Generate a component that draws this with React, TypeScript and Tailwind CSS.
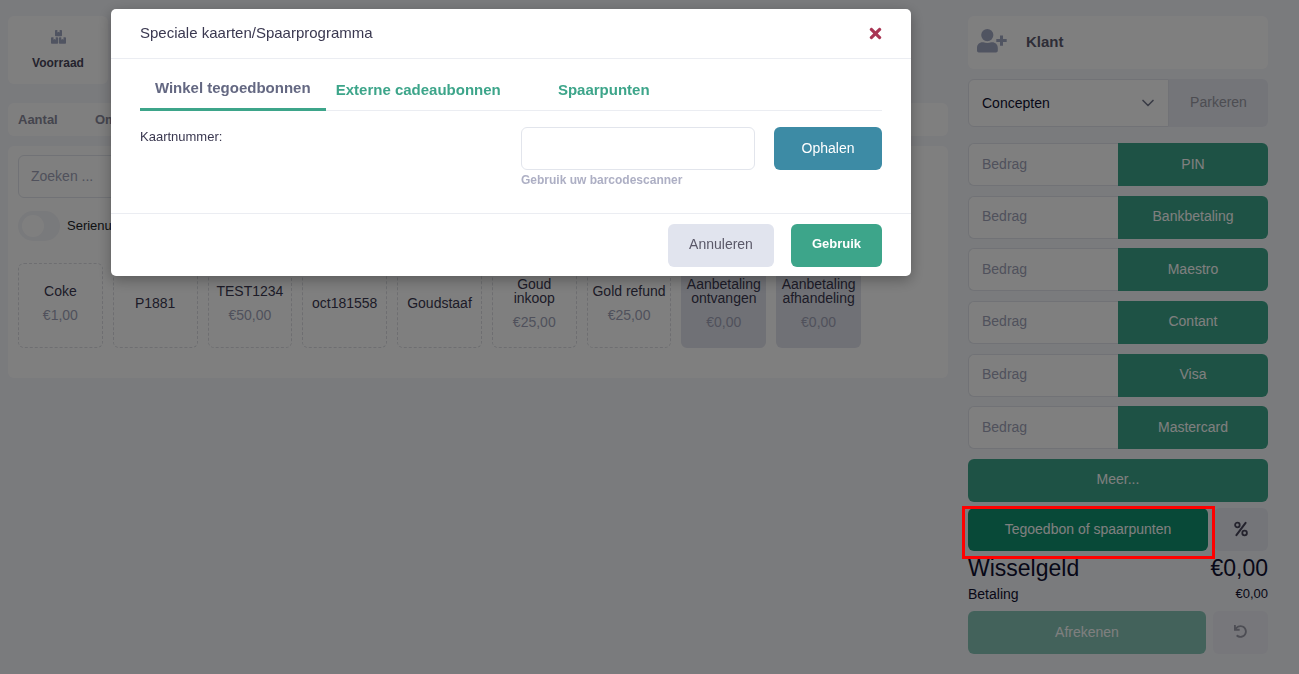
import React from "react";
import { FaTimes, FaUndo } from "react-icons/fa";
import { ChevronDown } from "lucide-react";

type Product = { name: string; price?: string; filled?: boolean };

const products: Product[] = [
  { name: "Coke", price: "€1,00" },
  { name: "P1881" },
  { name: "TEST1234", price: "€50,00" },
  { name: "oct181558" },
  { name: "Goudstaaf" },
  { name: "Goud inkoop", price: "€25,00" },
  { name: "Gold refund", price: "€25,00" },
  { name: "Aanbetaling ontvangen", price: "€0,00", filled: true },
  { name: "Aanbetaling afhandeling", price: "€0,00", filled: true },
];

const methods = ["PIN", "Bankbetaling", "Maestro", "Contant", "Visa", "Mastercard"];

function BoxesIcon() {
  return (
    <svg viewBox="0 0 15 14" className="h-[14px] w-[15px] text-[#a1a8c3]" fill="currentColor" aria-hidden="true">
      <path d="M4.8 0H6.4V2.4L7.5 1.8L8.6 2.4V0H10.2Q11 0 11 .8V5.4Q11 6.2 10.2 6.2H4.8Q4 6.2 4 5.4V.8Q4 0 4.8 0Z" />
      <path d="M.8 7.2H2.5V9.7L3.6 9L4.7 9.7V7.2H6.3Q7.1 7.2 7.1 8V13Q7.1 13.8 6.3 13.8H.8Q0 13.8 0 13V8Q0 7.2 .8 7.2Z" />
      <path d="M8.7 7.2H10.3V9.7L11.4 9L12.5 9.7V7.2H14.2Q15 7.2 15 8V13Q15 13.8 14.2 13.8H8.7Q7.9 13.8 7.9 13V8Q7.9 7.2 8.7 7.2Z" />
    </svg>
  );
}

function UserPlusIcon() {
  return (
    <svg viewBox="0 0 30 24" className="h-6 w-[30px] text-[#a1a8c3]" fill="currentColor" aria-hidden="true">
      <circle cx="10.3" cy="6.1" r="6.1" />
      <path d="M5.5 13.2H6.4C8.8 14.2 11.8 14.2 14.2 13.2H15.2C18.4 13.2 20.8 15.6 20.8 18.8V21.8Q20.8 23.6 19 23.6H1.8Q0 23.6 0 21.8V18.8C0 15.6 2.3 13.2 5.5 13.2Z" />
      <path d="M23 6.4H26V10.1H29.7V13.1H26V16.8H23V13.1H19.3V10.1H23Z" />
    </svg>
  );
}

function PercentIcon() {
  return (
    <svg viewBox="0 0 14 16" className="h-4 w-[14px]" fill="none" stroke="currentColor" strokeWidth="1.8" aria-hidden="true">
      <circle cx="3.4" cy="4" r="2.3" />
      <circle cx="10.6" cy="12" r="2.3" />
      <path d="M11.6 1.8L2.4 14.2" strokeWidth="2" strokeLinecap="round" />
    </svg>
  );
}

function ProductTile({ name, price, filled }: Product) {
  return (
    <button
      type="button"
      className={`flex h-[85px] min-w-0 flex-col items-center justify-center gap-[10px] rounded-md pb-[6px] text-sm leading-[14px] text-[#3a3850] ${
        filled ? "bg-[#e1e3ec]" : "border border-dashed border-[#dcdde2]"
      }`}
    >
      <span className={name === "Goud inkoop" ? "px-4" : ""}>{name}</span>
      {price && <span className="text-[#a0a3b8]">{price}</span>}
    </button>
  );
}

function Register() {
  return (
    <main className="flex min-w-0 flex-1 flex-col">
      <button
        type="button"
        className="flex h-[68px] w-[100px] flex-col items-center justify-center gap-[11px] rounded-md bg-white text-xs font-bold text-[#48465b]"
      >
        <BoxesIcon />
        Voorraad
      </button>
      <div className="mt-[19px] flex h-[33px] items-center rounded-md bg-white px-[10px] text-[13px] font-bold text-[#8a8a9c]">
        <span className="w-[77px]">Aantal</span>
        <span>Omschrijving</span>
      </div>
      <section className="mt-[10px] h-[232px] rounded-md bg-white px-[10px] pt-[9px]">
        <input
          aria-label="Zoeken"
          placeholder="Zoeken ..."
          className="block h-[43px] w-full max-w-[843px] rounded-md border border-[#e2e5ec] px-3 pb-[2px] text-sm placeholder:text-[#a0a3b8]"
        />
        <label className="mt-[13px] flex items-center gap-[7px] text-[13px] text-[#212529]">
          <input type="checkbox" className="peer sr-only" />
          <span className="flex h-[30px] w-[42px] items-center rounded-full bg-[#f3f4f8] px-1">
            <span className="size-[22px] rounded-full bg-white" />
          </span>
          Serienummers
        </label>
        <div className="mt-[22px] grid max-w-[843px] grid-cols-9 gap-[10px]">
          {products.map((p) => (
            <ProductTile key={p.name} {...p} />
          ))}
        </div>
      </section>
    </main>
  );
}

function Checkout() {
  return (
    <aside className="w-[300px] shrink-0">
      <button
        type="button"
        className="flex h-[53px] w-full items-center gap-[19px] rounded-md bg-white px-[9px] text-[15px] font-bold text-[#5d5b6f]"
      >
        <span className="pb-[3px]">
          <UserPlusIcon />
        </span>
        Klant
      </button>
      <div className="mt-[10px] flex h-12">
        <div className="relative w-[201px]">
          <select
            aria-label="Concepten"
            className="size-full appearance-none rounded-l-md border border-[#e2e5ec] bg-white px-[13px] text-sm text-[#101030]"
          >
            <option>Concepten</option>
          </select>
          <ChevronDown className="pointer-events-none absolute top-[14px] right-[11px] size-5 text-[#74788d]" />
        </div>
        <button type="button" className="flex-1 rounded-r-md bg-[#e8eaf3] pb-[2px] text-sm text-[#9a9ba5]">
          Parkeren
        </button>
      </div>
      <div className="mt-4 flex h-[359px] flex-col justify-between">
        {methods.map((m) => (
          <div key={m} className="flex h-[43px]">
            <input
              aria-label={`Bedrag ${m}`}
              placeholder="Bedrag"
              className="w-1/2 rounded-l-md border border-r-0 border-[#e2e5ec] bg-white px-[13px] pb-[2px] text-sm placeholder:text-[#a0a3b8]"
            />
            <button type="button" className="w-1/2 rounded-r-md bg-[#3da58a] pb-[2px] text-sm text-white">
              {m}
            </button>
          </div>
        ))}
        <button type="button" className="h-[43px] rounded-md bg-[#3da58a] pb-[2px] text-sm text-white">
          Meer...
        </button>
      </div>
      <div className="mt-[6px] flex h-[43px] gap-[6px]">
        <div className="relative w-60">
          <button type="button" className="size-full rounded-md bg-[#109270] pb-[2px] text-sm text-white">
            Tegoedbon of spaarpunten
          </button>
          <span className="pointer-events-none absolute -top-[2px] -right-[7px] -bottom-2 -left-[6px] z-20 border-[3px] border-[#ff0000]" />
        </div>
        <button
          type="button"
          aria-label="Korting"
          className="flex flex-1 items-center justify-center rounded-md bg-[#e8eaf3] pb-[2px] text-[#48465b]"
        >
          <PercentIcon />
        </button>
      </div>
      <div className="mt-1 flex items-center justify-between text-[23px] leading-[26px] text-[#101030]">
        <span>Wisselgeld</span>
        <span>€0,00</span>
      </div>
      <div className="mt-[3px] flex items-center justify-between text-sm leading-5 text-[#101030]">
        <span>Betaling</span>
        <span className="text-[13px]">€0,00</span>
      </div>
      <div className="mt-[7px] flex h-[43px] gap-[7px]">
        <button type="button" className="w-[238px] rounded-md bg-[#86c5b6] pb-[2px] text-sm text-white">
          Afrekenen
        </button>
        <button
          type="button"
          aria-label="Herstellen"
          className="flex flex-1 items-center justify-center rounded-md bg-[#eeeff6] pb-[2px] text-[#9a9ba8]"
        >
          <FaUndo className="size-[13px]" />
        </button>
      </div>
    </aside>
  );
}

function GiftCardDialog() {
  return (
    <div
      role="dialog"
      aria-labelledby="dialog-title"
      className="w-full max-w-[800px] rounded-[5px] bg-white shadow-[0_4px_14px_rgba(0,0,0,0.3)]"
    >
      <header className="flex h-[50px] items-center justify-between border-b border-[#ebedf2] px-[29px] pb-px">
        <h2 id="dialog-title" className="text-[15px] text-[#3a3850]">
          Speciale kaarten/Spaarprogramma
        </h2>
        <button type="button" aria-label="Sluiten" className="text-[#a93554]">
          <FaTimes className="-mr-[2px] size-[17px]" />
        </button>
      </header>
      <div className="h-[154px] px-[29px] pt-2">
        <div role="tablist" className="grid h-11 grid-cols-4 border-b border-[#ebedf2] text-[15px] font-bold text-[#3da58a]">
          <button role="tab" aria-selected="true" className="-mb-px border-b-[3px] border-[#3da58a] pt-[2px] text-[#646882]">
            Winkel tegoedbonnen
          </button>
          <button role="tab" aria-selected="false" className="pt-1">
            Externe cadeaubonnen
          </button>
          <button role="tab" aria-selected="false" className="pt-1">
            Spaarpunten
          </button>
        </div>
        <div className="mt-4 flex items-start">
          <label htmlFor="card" className="flex-1 text-[13px] leading-5 text-[#3a3850]">
            Kaartnummer:
          </label>
          <div className="w-[234px]">
            <input id="card" className="block h-[43px] w-full rounded-md border border-[#e2e5ec] px-3 text-sm" />
            <p className="text-xs leading-5 font-bold text-[#adafc4]">Gebruik uw barcodescanner</p>
          </div>
          <button type="button" className="ml-[19px] h-[43px] w-[108px] rounded-md bg-[#3d8ba5] pb-[2px] text-sm text-white">
            Ophalen
          </button>
        </div>
      </div>
      <footer className="flex h-[63px] items-center justify-end gap-[17px] border-t border-[#ebedf2] px-[29px] text-sm">
        <button type="button" className="h-[43px] w-[106px] rounded-md bg-[#e1e4ee] pb-[2px] text-[#5a5868]">
          Annuleren
        </button>
        <button type="button" className="h-[43px] w-[91px] rounded-md bg-[#3da58a] pb-[2px] text-[13px] font-bold text-white">
          Gebruik
        </button>
      </footer>
    </div>
  );
}

export default function App() {
  return (
    <div className="min-h-screen bg-[#f5f6fa] font-['Liberation_Sans',Arial,sans-serif]">
      <div className="flex items-start gap-5 pt-4 pr-[31px] pl-2">
        <Register />
        <Checkout />
      </div>
      <div className="fixed inset-0 z-10 bg-black/50 pt-[9px] pl-[111px]">
        <GiftCardDialog />
      </div>
    </div>
  );
}
